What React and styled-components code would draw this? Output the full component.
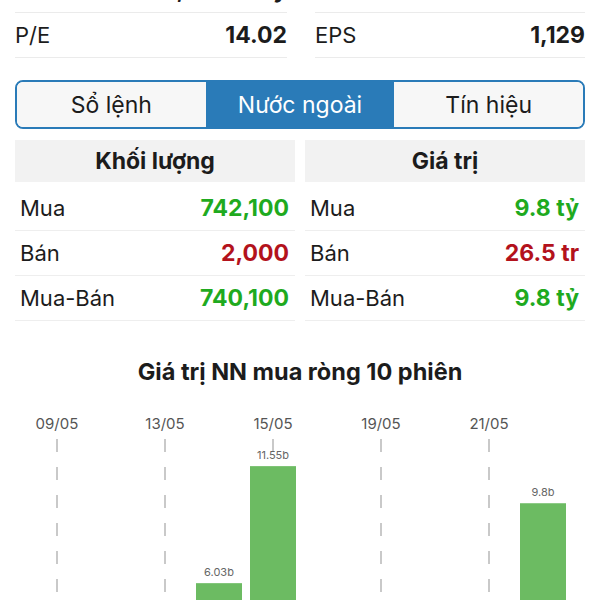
import React from "react"
import styled, { createGlobalStyle } from "styled-components"

const GlobalStyle = createGlobalStyle`
	body {
		margin: 0;
		background: #ffffff;
		font-family: Inter, "Noto Sans", sans-serif;
		color: #1c1c1c;
		overflow: hidden;
	}
`

const stats = [
	[
		{ label: "Vốn hóa", value: "4,126.45 tỷ" },
		{ label: "ROE", value: "12.5%" }
	],
	[
		{ label: "P/E", value: "14.02" },
		{ label: "EPS", value: "1,129" }
	]
]

const tabs = ["Sổ lệnh", "Nước ngoài", "Tín hiệu"]

const tables = [
	{
		title: "Khối lượng",
		rows: [
			{ label: "Mua", value: "742,100", tone: "up" },
			{ label: "Bán", value: "2,000", tone: "down" },
			{ label: "Mua-Bán", value: "740,100", tone: "up" }
		]
	},
	{
		title: "Giá trị",
		rows: [
			{ label: "Mua", value: "9.8 tỷ", tone: "up" },
			{ label: "Bán", value: "26.5 tr", tone: "down" },
			{ label: "Mua-Bán", value: "9.8 tỷ", tone: "up" }
		]
	}
]

const sessions = [
	{ date: "09/05", value: 0 },
	{ date: "10/05", value: 0 },
	{ date: "13/05", value: 0 },
	{ date: "14/05", value: 6.03 },
	{ date: "15/05", value: 11.55 },
	{ date: "16/05", value: 0 },
	{ date: "19/05", value: 0 },
	{ date: "20/05", value: 0 },
	{ date: "21/05", value: 0 },
	{ date: "22/05", value: 9.8 }
]

const App = () => {
	return (
		<>
			<GlobalStyle />
			<Page>
				{stats.map((pair, i) => (
					<StatGrid key={i}>
						{pair.map((s) => (
							<StatRow key={s.label}>
								<Label>{s.label}</Label>
								<StrongValue>{s.value}</StrongValue>
							</StatRow>
						))}
					</StatGrid>
				))}

				<TabBar>
					{tabs.map((t) => (
						<Tab key={t} active={t === "Nước ngoài"}>
							{t}
						</Tab>
					))}
				</TabBar>

				<TableGrid>
					{tables.map((table) => (
						<div key={table.title}>
							<TableHeader>{table.title}</TableHeader>
							{table.rows.map((r) => (
								<TableRow key={r.label}>
									<Label>{r.label}</Label>
									<ToneValue tone={r.tone}>{r.value}</ToneValue>
								</TableRow>
							))}
						</div>
					))}
				</TableGrid>

				<ChartTitle>Giá trị NN mua ròng 10 phiên</ChartTitle>
			</Page>
			<Chart />
		</>
	)
}

const Chart = () => {
	const slot = 54
	const first = 57
	const base = 312
	const scale = 21.2
	return (
		<ChartSvg width="600" height="220" viewBox="0 0 600 220">
			{sessions.map((s, i) =>
				i % 2 === 0 ? (
					<g key={s.date}>
						<text x={first + slot * i} y="29.5" textAnchor="middle" fontSize="15" fill="#555">
							{s.date}
						</text>
						<line
							x1={first + slot * i}
							x2={first + slot * i}
							y1="40"
							y2="220"
							stroke="#b8b8b8"
							strokeWidth="1.5"
							strokeDasharray="13 15"
						/>
					</g>
				) : null
			)}
			{sessions.map((s, i) => {
				if (!s.value) return null
				const cx = first + slot * i
				const top = base - s.value * scale
				return (
					<g key={s.date + "bar"}>
						<rect x={cx - 23} y={top} width="46" height={base - top} fill="#6cbb62" />
						<text x={cx} y={top - 7.5} textAnchor="middle" fontSize="11" fill="#666">
							{s.value + "b"}
						</text>
					</g>
				)
			})}
		</ChartSvg>
	)
}

const Page = styled.div`
	margin-top: -32px;
	padding: 0 15px;
`

const StatGrid = styled.div`
	display: grid;
	grid-template-columns: 272px 1fr;
	column-gap: 28px;
`

const StatRow = styled.div`
	height: 44px;
	display: flex;
	align-items: center;
	justify-content: space-between;
	border-bottom: 1px solid #ebebeb;
`

const Label = styled.span`
	font-size: 22px;
	font-weight: 400;
	color: #1c1c1c;
`

const StrongValue = styled.span`
	font-size: 23px;
	font-weight: 700;
	color: #1c1c1c;
`

const ToneValue = styled.span`
	font-size: 23px;
	font-weight: 700;
	color: ${({ tone }) => (tone === "down" ? "#b3121c" : "#1faa1f")};
`

const TabBar = styled.div`
	margin-top: 22px;
	display: flex;
	height: 45px;
	border: 2px solid #2a7bb8;
	border-radius: 8px;
	overflow: hidden;
`

const Tab = styled.div`
	flex: 1;
	display: flex;
	align-items: center;
	justify-content: center;
	font-size: 23px;
	background: ${({ active }) => (active ? "#2a7bb8" : "#f7f7f7")};
	color: ${({ active }) => (active ? "#ffffff" : "#1c1c1c")};
`

const TableGrid = styled.div`
	margin-top: 11px;
	display: grid;
	grid-template-columns: 1fr 1fr;
	column-gap: 10px;
`

const TableHeader = styled.div`
	height: 42px;
	margin-bottom: 4px;
	display: flex;
	align-items: center;
	justify-content: center;
	background: #f2f2f2;
	font-size: 23px;
	font-weight: 700;
	color: #1c1c1c;
`

const TableRow = styled.div`
	height: 44px;
	padding: 0 6px 0 5px;
	display: flex;
	align-items: center;
	justify-content: space-between;
	border-bottom: 1px solid #eeeeee;
`

const ChartTitle = styled.h2`
	margin: 38px 0 0;
	text-align: center;
	font-size: 23.5px;
	line-height: 26px;
	font-weight: 700;
	color: #1c1c1c;
`

const ChartSvg = styled.svg`
	display: block;
	margin-top: 14px;
	font-family: Inter, "Noto Sans", sans-serif;
`

export default App
